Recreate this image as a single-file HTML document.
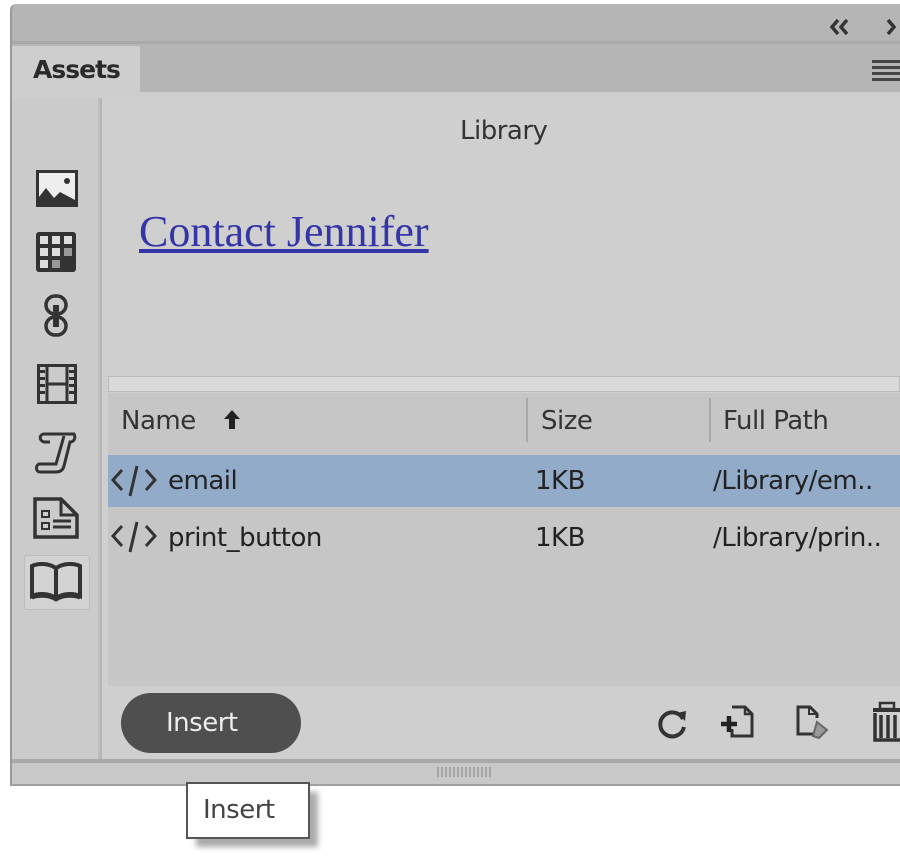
<!DOCTYPE html>
<html><head><meta charset="utf-8"><style>
body{margin:0;width:900px;height:858px;background:#fff;position:relative;overflow:hidden;font-family:"DejaVu Sans","Liberation Sans",sans-serif;color:#222}
div{position:absolute;box-sizing:border-box}
svg{position:absolute}
.t{font-size:26px;white-space:nowrap;letter-spacing:-0.5px}
</style></head><body>
<div style="left:10px;top:4px;width:890px;height:782px;background:#b5b5b5;border-left:2px solid #999;border-bottom:2px solid #a0a0a0;border-top-left-radius:6px"></div>
<div style="left:12px;top:41px;width:888px;height:3px;background:#a9a9a9"></div>
<svg style="left:828px;top:16px" width="30" height="22" viewBox="0 0 30 22"><path d="M10 4 L4 11 L10 18 M19 4 L13 11 L19 18" stroke="#333" stroke-width="3.5" fill="none"/></svg>
<svg style="left:884px;top:16px" width="16" height="22" viewBox="0 0 16 22"><path d="M4 4 L10 11 L4 18" stroke="#333" stroke-width="3.5" fill="none"/></svg>
<div style="left:12px;top:46px;width:128px;height:52px;background:#cecece"></div>
<div class="t" style="left:33px;top:55px;font-size:25px;color:#2a2a2a;font-weight:bold;letter-spacing:-1px">Assets</div>
<div style="left:140px;top:92px;width:760px;height:6px;background:#cecece"></div>
<svg style="left:872px;top:58px" width="28" height="24"><g fill="#444"><rect x="0" y="2" width="28" height="3"/><rect x="0" y="8" width="28" height="3"/><rect x="0" y="14" width="28" height="3"/><rect x="0" y="20" width="28" height="3"/></g></svg>
<div style="left:12px;top:98px;width:88px;height:662px;background:#cbcbcb;border-right:2px solid #bdbdbd"></div>
<div style="left:102px;top:98px;width:798px;height:662px;background:#cfcfcf"></div>
<div class="t" style="left:460px;top:116px;font-size:26px;color:#333">Library</div>
<div style="left:139px;top:206px;font-family:'Liberation Serif',serif;font-size:44px;color:#3436a8;text-decoration:underline;white-space:nowrap">Contact Jennifer</div>
<div style="left:108px;top:376px;width:792px;height:16px;background:#dadada;border:1px solid #bbb"></div>
<div style="left:108px;top:393px;width:792px;height:293px;background:#c6c6c6"></div>
<div class="t" style="left:121px;top:406px;color:#333">Name</div>
<svg style="left:222px;top:408px" width="20" height="22"><path d="M10 2 L2 11 H7 V21 H13 V11 H18 Z" fill="#222"/></svg>
<div style="left:526px;top:398px;width:2px;height:44px;background:#a8a8a8"></div>
<div style="left:709px;top:398px;width:2px;height:44px;background:#a8a8a8"></div>
<div class="t" style="left:541px;top:406px;color:#333">Size</div>
<div class="t" style="left:723px;top:406px;color:#333">Full Path</div>
<div style="left:108px;top:455px;width:792px;height:52px;background:#92abc9"></div>
<svg style="left:110px;top:462px" width="48" height="38" viewBox="0 0 48 38"><path d="M12 8 L3 18 L12 28 M36 8 L45 18 L36 28 M27 4 L20 34" stroke="#333" stroke-width="3" fill="none"/></svg>
<div class="t" style="left:168px;top:466px">email</div>
<div class="t" style="left:535px;top:466px">1KB</div>
<div class="t" style="left:713px;top:466px">/Library/em..</div>
<svg style="left:110px;top:518px" width="48" height="38" viewBox="0 0 48 38"><path d="M12 8 L3 18 L12 28 M36 8 L45 18 L36 28 M27 4 L20 34" stroke="#333" stroke-width="3" fill="none"/></svg>
<div class="t" style="left:168px;top:523px">print_button</div>
<div class="t" style="left:535px;top:523px">1KB</div>
<div class="t" style="left:713px;top:523px">/Library/prin..</div>
<div style="left:121px;top:693px;width:180px;height:60px;background:#4f4f4f;border-radius:30px"></div>
<div class="t" style="left:166px;top:708px;color:#eee">Insert</div>
<svg style="left:655px;top:705px" width="36" height="36" viewBox="0 0 36 36"><path d="M28 14 A12 12 0 1 0 29 22" stroke="#333" stroke-width="4" fill="none"/><path d="M22 8 L31 6 L30 16 Z" fill="#333"/></svg>
<svg style="left:718px;top:703px" width="40" height="36" viewBox="0 0 40 36"><path d="M14 4 H27 L34 11 V33 H14 V26" stroke="#333" stroke-width="3" fill="none"/><path d="M27 4 V11 H34" stroke="#333" stroke-width="2.5" fill="none"/><path d="M3 21 H19 M11 13 V29" stroke="#222" stroke-width="4.5"/></svg>
<svg style="left:795px;top:704px" width="36" height="36" viewBox="0 0 36 36"><path d="M18 30 H3 V3 H15 L22 10 V14" stroke="#333" stroke-width="3" fill="none"/><path d="M14 3 V10 H22" stroke="#333" stroke-width="2" fill="none"/><path d="M22 18 L32 26 L24 34 L18 32 Z" stroke="#666" stroke-width="2" fill="#999"/></svg>
<svg style="left:871px;top:700px" width="29" height="42" viewBox="0 0 29 42"><rect x="2" y="8" width="27" height="4" fill="#333"/><rect x="9" y="3" width="14" height="6" fill="none" stroke="#333" stroke-width="2.5"/><path d="M4 13 V40 H29 M10 15 V38 M17 15 V38 M24 15 V38" stroke="#333" stroke-width="3.5" fill="none"/></svg>
<div style="left:12px;top:759px;width:888px;height:4px;background:#a9a9a9"></div>
<div style="left:12px;top:763px;width:888px;height:21px;background:#c8c8c8"></div>
<svg style="left:436px;top:765px" width="60" height="14"><g stroke="#999" stroke-width="1.5"><path d="M2 2V12M6 2V12M10 2V12M14 2V12M18 2V12M22 2V12M26 2V12M30 2V12M34 2V12M38 2V12M42 2V12M46 2V12M50 2V12M54 2V12"/></g></svg>
<svg style="left:36px;top:170px" width="42" height="37" viewBox="0 0 42 37"><rect x="1.5" y="1.5" width="39" height="34" fill="#eee" stroke="#333" stroke-width="3"/><path d="M3 34 L3 27 L10 18 L18 28 L24 22 L39 30 V34 Z" fill="#333"/><circle cx="31" cy="11" r="3" fill="#333"/></svg>
<svg style="left:36px;top:232px" width="40" height="40" viewBox="0 0 40 40"><rect x="0" y="0" width="40" height="40" rx="3" fill="#333"/><g fill="#ddd"><rect x="4" y="4" width="8" height="8"/><rect x="16" y="4" width="8" height="8"/><rect x="28" y="4" width="8" height="8"/><rect x="4" y="16" width="8" height="8"/><rect x="16" y="16" width="8" height="8"/><rect x="4" y="28" width="8" height="8"/></g><g fill="#999"><rect x="28" y="16" width="8" height="8"/><rect x="16" y="28" width="8" height="8"/></g></svg>
<svg style="left:42px;top:293px" width="32" height="48" viewBox="0 0 32 48"><rect x="4" y="3" width="20" height="18" rx="9" fill="none" stroke="#333" stroke-width="3.5"/><rect x="4" y="24" width="20" height="18" rx="9" fill="none" stroke="#333" stroke-width="3.5"/><rect x="11" y="12" width="6" height="22" fill="#333"/></svg>
<svg style="left:37px;top:364px" width="40" height="40" viewBox="0 0 40 40"><rect x="1.5" y="1.5" width="37" height="37" fill="none" stroke="#333" stroke-width="3"/><path d="M10 2 V38 M30 2 V38 M10 20 H30" stroke="#333" stroke-width="3"/><g fill="#333"><rect x="3" y="6" width="5" height="3"/><rect x="3" y="13" width="5" height="3"/><rect x="3" y="20" width="5" height="3"/><rect x="3" y="27" width="5" height="3"/><rect x="32" y="6" width="5" height="3"/><rect x="32" y="13" width="5" height="3"/><rect x="32" y="20" width="5" height="3"/><rect x="32" y="27" width="5" height="3"/></g></svg>
<svg style="left:34px;top:430px" width="46" height="44" viewBox="0 0 46 44"><path d="M10 4 H40 C42 8 40 12 36 12 L30 36 C29 40 26 42 22 42 H6 C2 42 1 36 5 34 H22 L30 6 M10 4 C6 4 4 10 10 12 H16" stroke="#333" stroke-width="3" fill="none"/></svg>
<svg style="left:33px;top:497px" width="46" height="42" viewBox="0 0 46 42"><path d="M2 2 H28 L44 18 V40 H2 Z" fill="none" stroke="#333" stroke-width="3.5"/><path d="M28 2 V18 H44" fill="none" stroke="#333" stroke-width="3"/><rect x="9" y="14" width="7" height="6" fill="none" stroke="#333" stroke-width="2"/><rect x="9" y="26" width="7" height="6" fill="none" stroke="#333" stroke-width="2"/><path d="M20 24 H38 M20 30 H38" stroke="#333" stroke-width="3"/></svg>
<div style="left:24px;top:555px;width:66px;height:55px;background:#d2d2d2;border:1px solid #bcbcbc;border-radius:3px"></div>
<svg style="left:30px;top:560px" width="52" height="42" viewBox="0 0 52 42"><path d="M26 8 C18 3 8 3 2 6 V36 C8 33 18 33 26 38 C34 33 44 33 50 36 V6 C44 3 34 3 26 8 Z M26 8 V38" fill="none" stroke="#333" stroke-width="4"/><path d="M2 38 C10 35 20 36 26 40 C32 36 42 35 50 38" stroke="#333" stroke-width="3" fill="none"/></svg>
<div style="left:196px;top:792px;width:122px;height:55px;background:#aaa;filter:blur(3px)"></div>
<div style="left:186px;top:782px;width:124px;height:57px;background:#fff;border:2px solid #555"></div>
<div class="t" style="left:203px;top:795px;color:#444">Insert</div>
</body></html>
